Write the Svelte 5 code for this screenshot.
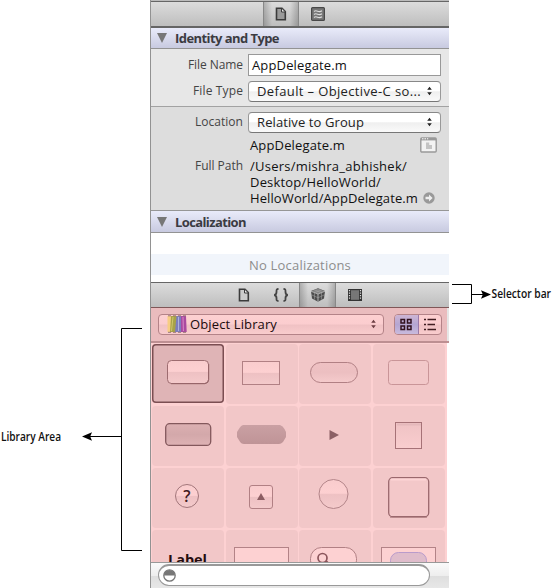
<script>
  // Spreads a label's letters so that it fills the given width.
  function fit(node, width) {
    const natural = node.getBoundingClientRect().width;
    node.style.letterSpacing = (width - natural) / node.textContent.length + 'px';
  }

  const objects = [
    'push', 'gradient', 'pill', 'outline',
    'textured', 'hexagon', 'disclosure', 'square',
    'help', 'up', 'round', 'bevel',
    'label', 'field', 'search', 'token'
  ];
</script>

{#snippet arrows()}
  <svg width="7" height="10" viewBox="0 0 7 10"><path d="M3.5 .8 5.800 3.700H1.200zM3.500 9.200 1.200 6.300h4.600z" fill="currentColor" /></svg>
{/snippet}

{#snippet doc(filled)}
  <svg width="12" height="14" viewBox="0 0 12 14">
    <path d="M1.5 1.2H7L10.3 4.6V12.7H1.5z" fill={filled ? '#9a9a9a' : '#ccc'} stroke="#3b3b3b" stroke-width="1.6" />
    <path d="M6.5 1V5H10.5z" fill="#eee" stroke="#3b3b3b" />
  </svg>
{/snippet}

<svg class="defs" width="0" height="0">
  <defs>
    <linearGradient id="gloss" x2="0" y2="1"><stop stop-color="#f9cccd" /><stop offset=".47" stop-color="#fdd0d1" /><stop offset=".52" stop-color="#eec1c3" /><stop offset="1" stop-color="#f4cacb" /></linearGradient>
    <linearGradient id="shade" x2="0" y2="1"><stop stop-color="#efc1c3" /><stop offset=".5" stop-color="#ecbfc1" /><stop offset="1" stop-color="#f5cbcc" /></linearGradient>
    <linearGradient id="dark" x2="0" y2="1"><stop stop-color="#dcb0b2" /><stop offset=".5" stop-color="#d3a8aa" /><stop offset="1" stop-color="#deb2b4" /></linearGradient>
    <linearGradient id="hex" x2="0" y2="1"><stop stop-color="#caa0a3" /><stop offset="1" stop-color="#bf9497" /></linearGradient>
    <linearGradient id="panel" x2="0" y2="1"><stop stop-color="#efc2c4" /><stop offset="1" stop-color="#f9cdce" /></linearGradient>
  </defs>
</svg>

<div class="page">
  <svg class="left" width="150" height="588" viewBox="0 0 150 588">
    <text x="1" y="440.5" textLength="60" lengthAdjust="spacingAndGlyphs">Library Area</text>
    <path d="M142 328.5H121.5V550.5H142M121 436.5H88" fill="none" stroke="#000" />
    <path d="M82 436.5 92 432.2 90.2 436.5 92 440.8z" />
  </svg>

  <main>
    <div class="cap"></div>
    <nav class="tabs top">
      <span class="tab active first">{@render doc(true)}</span>
      <span class="tab second">
        <svg width="14" height="14" viewBox="0 0 14 14">
          <rect x=".6" y=".6" width="12.8" height="12.8" rx="1" fill="#777" stroke="#484848" stroke-width="1.2" />
          <path d="M3 4.5c3-2.5 4 2 8-.7M3 7.5c3-2.5 4 2 8-.7M3 10.5c3-2.5 4 2 8-.7" fill="none" stroke="#ddd" stroke-width="1.1" />
        </svg>
      </span>
    </nav>

    <h2><i></i><span use:fit={104}>Identity and Type</span></h2>
    <section class="identity">
      <div class="row r1"><label for="name"><span use:fit={55}>File Name</span></label><div class="input"><span use:fit={95}>AppDelegate.m</span></div></div>
      <div class="row r2"><label for="type"><span use:fit={50}>File Type</span></label><div class="popup"><span use:fit={164}>Default – Objective-C so...</span>{@render arrows()}</div></div>
    </section>
    <section class="location">
      <div class="row r3"><label for="loc"><span use:fit={48}>Location</span></label><div class="popup"><span use:fit={107}>Relative to Group</span>{@render arrows()}</div></div>
      <div class="row r4">
        <label for="file"></label><div class="value"><span use:fit={95}>AppDelegate.m</span></div>
        <svg width="17" height="16" viewBox="0 0 17 16">
          <rect x=".8" y="1" width="15.4" height="14" rx="1" fill="#f3f3f3" stroke="#999" stroke-width="1.4" />
          <path d="M1 2.2H16" stroke="#999" stroke-width="2.4" /><path d="M2 1.8h1.5M4.5 1.8H6M7 1.8h1.2" stroke="#fff" />
          <path d="M6 5.5h3.2v2.6H12V12H6z" fill="#c4c4c4" />
        </svg>
      </div>
      <div class="row r5">
        <label for="path"><span use:fit={48}>Full Path</span></label>
        <div class="value path"><span use:fit={157}>/Users/mishra_abhishek/</span><span use:fit={131}>Desktop/HelloWorld/</span><span use:fit={168}>HelloWorld/AppDelegate.m</span></div>
        <svg width="12" height="12" viewBox="0 0 12 12"><circle cx="6" cy="6" r="5.7" fill="#999" /><path d="M2.5 4.8H6V2.6L9.6 6 6 9.4V7.2H2.5z" fill="#eee" /></svg>
      </div>
    </section>

    <h2 class="loc"><i></i><span use:fit={71}>Localization</span></h2>
    <section class="localization"><div><span use:fit={102}>No Localizations</span></div></section>

    <nav class="tabs library-tabs">
      <span class="tab d">{@render doc(false)}</span>
      <span class="tab braces">
        <svg width="16" height="14" viewBox="0 0 16 14"><path d="M5.5 1C3.3 1 3.5 2 3.5 4S3 6.7 1.2 7c1.8.3 2.3 1 2.3 3s-.2 3 2 3M10.5 1c2.2 0 2 1 2 3s.5 2.700 2.300 3c-1.800.3-2.300 1-2.300 3s.2 3-2 3" fill="none" stroke="#444" stroke-width="1.8" /></svg>
      </span>
      <span class="tab active cube">
        <svg width="16" height="14" viewBox="0 0 16 14"><path d="M8 .3 15 3 14 10.500 8 13.800 2 10.500 1 3z" fill="#4c4c4c" /><path d="M8 .6 14.500 3 8 5.600 1.500 3z" fill="#858585" /><path d="M1 3.200 8 6 15 3.200M8 6V13.500" fill="none" stroke="#ccc" stroke-width=".8" /><path d="M4.500 1.800l7 3M11.500 1.800l-7 3M1.500 6.800 8 9.800l6.500-3M4.500 4.600V11.500M11.500 4.600V11.500" fill="none" stroke="#aaa" stroke-width=".5" /></svg>
      </span>
      <span class="tab film">
        <svg width="14" height="12" viewBox="0 0 14 12"><rect width="14" height="12" fill="#333" /><rect x="3" y="1.200" width="8" height="9.600" fill="#777" /><path d="M1.500 1V11M12.500 1V11" stroke="#ddd" stroke-width="1.200" stroke-dasharray="1.300 1.200" /></svg>
      </span>
    </nav>

    <div class="library-head">
      <div class="picker">
        <svg width="20" height="18" viewBox="0 0 20 18">
          <path d="M.5 1h4v16h-4z" fill="#f7cd83" /><path d="M4 1h6v16H3z" fill="#a7a247" /><path d="M6 2 4.500 16" stroke="#d0c66c" />
          <path d="M9.500 1H14.500V17H8z" fill="#7d7dbd" /><path d="M11.500 2V16" stroke="#aeb2df" /><path d="M14 1h5l.7 16H14z" fill="#a94aa0" /><path d="M16 2l.4 14" stroke="#db89c7" />
          <path d="M1 .8H19M1 17.300H19.500" stroke="#977" stroke-dasharray="3 2" />
        </svg>
        <span use:fit={87}>Object Library</span>{@render arrows()}
      </div>
      <div class="views">
        <b><svg width="12" height="13" viewBox="0 0 12 13"><path d="M1 1.500h3.500v3.500H1zM7.500 1.500H11v3.500H7.500zM1 8h3.500v3.500H1zM7.500 8H11v3.500H7.500z" fill="none" stroke="#32121f" stroke-width="1.500" /></svg></b>
        <b><svg width="12" height="13" viewBox="0 0 12 13"><path d="M0 1.500h2M0 6.500h2M0 11.500h2M3.500 1.500H12M3.500 6.500H11M3.500 11.500H12" stroke="#401c20" stroke-width="1.600" /></svg></b>
      </div>
    </div>

    <div class="grid">
      {#each objects as kind, i}
        <div class="cell" class:selected={i === 0}>
          <svg width="72" height="60" viewBox="0 0 72 60" stroke="#b18084">
            {#if kind === 'push'}
              <rect x="15.500" y="16.500" width="41" height="23" rx="4" fill="url(#gloss)" stroke="#9d6c70" /><path d="M19 39.700H53Q56.700 39 56.700 35.500V20" fill="none" stroke="#956468" />
            {:else if kind === 'gradient'}
              <rect x="16.500" y="17.500" width="37" height="23" fill="url(#gloss)" />
            {:else if kind === 'pill'}
              <rect x="11.500" y="18.500" width="47" height="20" rx="10" fill="url(#shade)" />
            {:else if kind === 'outline'}
              <rect x="15.500" y="16.500" width="40" height="24" rx="3" fill="#f2c8c9" stroke="#c99598" />
            {:else if kind === 'textured'}
              <rect x="13.700" y="17.700" width="45" height="21.700" rx="4" fill="url(#dark)" stroke="#83585c" stroke-width="1.300" />
            {:else if kind === 'hexagon'}
              <path d="M17 19H54Q57 20 58.500 23L60 26v5L57 36Q55 38 53 38H18Q15 38 13.500 35L11 31V26L13.500 22Q15 19.500 17 19z" fill="url(#hex)" stroke="none" />
            {:else if kind === 'disclosure'}
              <path d="M30.500 24 40 29 30.500 34z" fill="#8c6065" stroke="none" />
            {:else if kind === 'square'}
              <rect x="22.500" y="16.500" width="26" height="26" fill="url(#panel)" stroke="#a67277" /><path d="M24 18.500H48" stroke="#e5b8bb" stroke-width="2" />
            {:else if kind === 'help'}
              <circle cx="35" cy="28" r="11.500" fill="url(#gloss)" stroke="#a2767a" />
              <text x="31.200" y="33.500" class="q" stroke="none">?</text>
            {:else if kind === 'up'}
              <rect x="23.500" y="17.500" width="23" height="23" rx="2.500" fill="url(#gloss)" /><path d="M31 32 35 25l4 7z" fill="#8c5d62" stroke="none" />
            {:else if kind === 'round'}
              <circle cx="34.500" cy="26" r="14.500" fill="url(#gloss)" stroke="#b38589" />
            {:else if kind === 'bevel'}
              <path d="M17 49.500H54" stroke="#a47376" opacity=".6" /><rect x="15.700" y="9.700" width="40" height="39" rx="4" fill="#f3c8c9" stroke="#9a686d" stroke-width="1.300" /><path d="M18 11.500H53" stroke="#fdd4d5" stroke-width="2" />
            {:else if kind === 'label'}
              <text x="16" y="34.500" class="lbl" textLength="39" lengthAdjust="spacingAndGlyphs" stroke="none">Label</text>
            {:else if kind === 'field'}
              <rect x="8.500" y="17.500" width="54" height="50" fill="#fdd1d2" stroke="#b38387" />
            {:else if kind === 'search'}
              <rect x="11.500" y="17.500" width="46" height="24" rx="11" fill="#fdd1d2" /><circle cx="23.500" cy="28" r="4.500" fill="none" stroke="#8b555b" stroke-width="1.700" /><path d="m27 31 4 4" stroke="#8b555b" stroke-width="2" />
            {:else}
              <rect x="8.500" y="17.500" width="54" height="50" fill="#fdd1d2" stroke="#b38387" /><rect x="17.500" y="22.500" width="36" height="24" rx="8" fill="#dfbccb" stroke="#b99bcb" />
            {/if}
          </svg>
        </div>
      {/each}
    </div>

    <footer>
      <div class="filter"><svg width="13" height="13" viewBox="0 0 13 13"><circle cx="6.500" cy="6.500" r="5.700" fill="#fff" stroke="#777" stroke-width="1.300" /><path d="M1 6.500a5.500 5.500 0 0 1 11 0z" fill="#777" /></svg></div>
    </footer>
  </main>

  <svg class="right" width="103" height="588" viewBox="449 0 103 588">
    <path d="M452 284.500H471.500V303.500H452M471 294.500H485" fill="none" stroke="#000" />
    <path d="M491 294.500 481 290.200 482.800 294.500 481 298.800z" />
    <text x="491.500" y="298.300" textLength="59.500" lengthAdjust="spacingAndGlyphs">Selector bar</text>
  </svg>
</div>

<style>
  :global(body) { background: #fff; overflow: hidden; }
  .page { display: flex; width: 552px; height: 588px; overflow: hidden; font: 13px/16px "Open Sans", "Noto Sans", sans-serif; color: #111; }
  .page span { white-space: nowrap; }
  svg { display: block; flex: none; }
  .defs { position: absolute; }
  .left text, .right text { font: 600 12px "Open Sans", sans-serif; fill: #111; }
  main { box-sizing: border-box; width: 299px; height: 588px; display: flex; flex-direction: column; border-left: 1px solid #929292; }
  main > * { box-sizing: border-box; flex: none; }
  .cap { height: 1px; background: #bbb; }
  .tabs { display: flex; background: linear-gradient(#dcdcdc, #bebebe); border-top: 1px solid #666; border-bottom: 2px solid #656565; }
  .top { height: 27px; padding-left: 112px; }
  .tab { display: flex; justify-content: center; align-items: center; }
  .active { box-sizing: border-box; background: linear-gradient(90deg, #0003, transparent 8px, transparent calc(100% - 8px), #0003); border: solid #888; border-width: 0 1px; }
  .first { width: 36px; }
  .second { width: 38px; }
  h2 { margin: 0; height: 21px; display: flex; align-items: center; font-size: 13px; line-height: 18px; font-weight: 700; color: #3b3b42; background: linear-gradient(#e9ebfa, #c8cae0); border-bottom: 1px solid #939393; }
  h2 i { width: 0; margin: 0 8px 0 6px; border: solid transparent; border-width: 10px 5.5px 0; border-top-color: #777; }
  .identity { height: 58px; padding-top: 5px; background: #e7e7e7; border-bottom: 1px solid #a2a2a2; }
  .location { height: 104px; padding-top: 4px; background: #ddd; border-bottom: 1px solid #969696; }
  .row { display: flex; }
  .row label { width: 92px; margin-right: 5px; display: flex; justify-content: flex-end; font-size: 12px; color: #444; }
  .r1, .r2, .r3 { height: 22px; align-items: center; }
  .r2 { margin-top: 4px; }
  .input, .popup { box-sizing: border-box; width: 193px; height: 22px; display: flex; align-items: center; background: #fff; border: 1px solid #999; padding-left: 3px; }
  .popup { height: 21px; border-radius: 4px; padding: 0 7px 0 8px; justify-content: space-between; background: linear-gradient(#fff, #fff 45%, #efefef 52%, #fafafa); border-color: #888 #999 #777; color: #222; }
  .value { width: 170px; margin-left: 2px; }
  .r4 { height: 16px; margin-top: 4px; }
  .r5 { margin-top: 5px; }
  .path { display: flex; flex-direction: column; align-items: flex-start; }
  .r5 svg { align-self: flex-end; margin: 0 0 2px 3px; }
  h2.loc { height: 22px; }
  .localization { height: 49px; padding-top: 21px; background: #fff; }
  .localization div { height: 21px; display: flex; align-items: center; justify-content: center; background: #f1f5fb; color: #8d8d8d; }
  .library-tabs { height: 26px; border-bottom: 1px solid #805758; padding-left: 75px; }
  .d { width: 36px; }
  .braces { width: 37px; }
  .cube { width: 37px; }
  .film { width: 37px; }
  .library-head { height: 35px; padding: 6px 0 0 7px; display: flex; gap: 10px; background: linear-gradient(90deg, #eabcbe 296px, #e6e6e6 296px); border-bottom: 2px solid #bd8f92; }
  .picker, .views { box-sizing: border-box; height: 21px; display: flex; align-items: center; border: 1px solid #b48388; border-radius: 4px; background: linear-gradient(#fdd0d1, #fbcdcf 45%, #f0c2c4 55%, #f9cccd); }
  .picker { width: 226px; padding: 0 6px 1px 8px; color: #6b3d42; }
  .picker span { color: #200a0c; margin: 0 auto 0 3px; }
  .views { width: 48px; overflow: hidden; }
  .views b { flex: 1; height: 100%; display: flex; align-items: center; justify-content: center; }
  .views b:first-child { background: linear-gradient(#cdb5d4, #b5a6d2 50%, #c8badd); border-right: 1px solid #9b79a8; }
  .grid { height: 219px; width: 296px; padding: 1px 0 0 1px; overflow: hidden; background: #fdd1d2; display: grid; grid-template-columns: repeat(4, 72px); grid-auto-rows: 60px; gap: 2px 1.7px; }
  .cell { box-sizing: border-box; border-radius: 4px; background: #f2c7c8; }
  .selected { height: 59px; background: #dfb4b6; box-shadow: inset 0 0 0 1.500px #7b4e52; }
  .q { font: 600 16px "Open Sans", sans-serif; fill: #40191e; }
  .lbl { font: 700 14px "Open Sans", sans-serif; fill: #250c0e; }
  footer { height: 26px; padding: 1px 0 0 7px; border-top: 1px solid #999; background: linear-gradient(#fafafa, #eee 50%, #dedede 51%, #e7e7e7); }
  .filter { box-sizing: border-box; width: 272px; height: 22px; border: 1px solid #999; border-top: 2px solid #999; border-radius: 11px; background: #fff; display: flex; align-items: center; padding-left: 4px; }
</style>
